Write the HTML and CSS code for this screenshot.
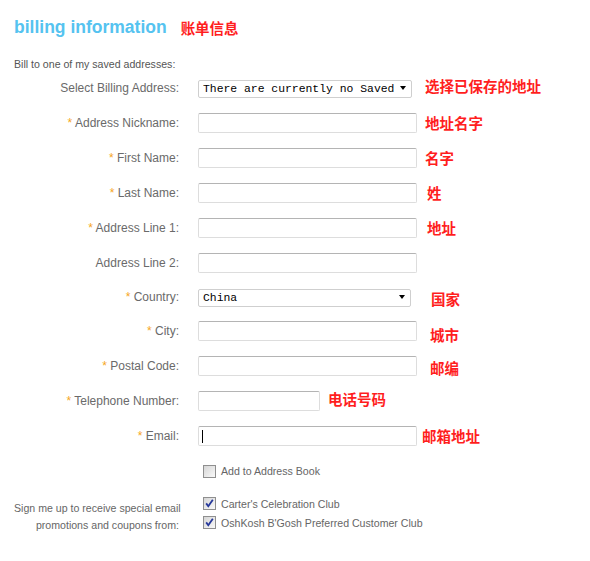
FILE: index.html
```html
<!DOCTYPE html>
<html lang="en">
<head>
  <meta charset="UTF-8">
  <meta name="viewport" content="width=device-width, initial-scale=1.0">
  <title>Billing Information</title>
  <link rel="stylesheet" href="styles.css">
</head>
<body>
  <div class="page">
    <div class="title-row">
      <h1>billing information</h1>
      <span class="note note-title">账单信息</span>
    </div>
    <p class="intro">Bill to one of my saved addresses:</p>

    <form class="billing-form">
      <div class="row">
        <label for="savedAddress">Select Billing Address:</label>
        <div class="field">
          <span class="select-box select-saved">
            <select id="savedAddress" name="savedAddress">
              <option>There are currently no Saved</option>
            </select>
          </span>
          <span class="note gap-md up">选择已保存的地址</span>
        </div>
      </div>

      <div class="row">
        <label for="nickname"><span class="req">*</span> Address Nickname:</label>
        <div class="field">
          <input type="text" id="nickname" name="nickname">
          <span class="note">地址名字</span>
        </div>
      </div>

      <div class="row">
        <label for="firstName"><span class="req">*</span> First Name:</label>
        <div class="field">
          <input type="text" id="firstName" name="firstName">
          <span class="note">名字</span>
        </div>
      </div>

      <div class="row">
        <label for="lastName"><span class="req">*</span> Last Name:</label>
        <div class="field">
          <input type="text" id="lastName" name="lastName">
          <span class="note gap-sm-plus">姓</span>
        </div>
      </div>

      <div class="row">
        <label for="address1"><span class="req">*</span> Address Line 1:</label>
        <div class="field">
          <input type="text" id="address1" name="address1">
          <span class="note gap-sm-plus">地址</span>
        </div>
      </div>

      <div class="row">
        <label for="address2">Address Line 2:</label>
        <div class="field">
          <input type="text" id="address2" name="address2">
        </div>
      </div>

      <div class="row row-short">
        <label for="country"><span class="req">*</span> Country:</label>
        <div class="field">
          <span class="select-box select-country">
            <select id="country" name="country">
              <option>China</option>
            </select>
          </span>
          <span class="note gap-lg down">国家</span>
        </div>
      </div>

      <div class="row">
        <label for="city"><span class="req">*</span> City:</label>
        <div class="field">
          <input type="text" id="city" name="city">
          <span class="note gap-md down-more">城市</span>
        </div>
      </div>

      <div class="row">
        <label for="postal"><span class="req">*</span> Postal Code:</label>
        <div class="field">
          <input type="text" id="postal" name="postal">
          <span class="note gap-md down">邮编</span>
        </div>
      </div>

      <div class="row">
        <label for="phone"><span class="req">*</span> Telephone Number:</label>
        <div class="field">
          <input type="text" id="phone" name="phone" class="input-short">
          <span class="note up">电话号码</span>
        </div>
      </div>

      <div class="row">
        <label for="email"><span class="req">*</span> Email:</label>
        <div class="field">
          <span class="caret-field">
            <input type="text" id="email" name="email">
          </span>
          <span class="note gap-sm">邮箱地址</span>
        </div>
      </div>

      <div class="row row-check">
        <span></span>
        <div class="check-list">
          <div class="check-item">
            <span class="check"></span>
            <span>Add to Address Book</span>
          </div>
        </div>
      </div>

      <div class="row row-signup">
        <div class="signup-text">Sign me up to receive special email<br>promotions and coupons from:</div>
        <div class="check-list">
          <div class="check-item">
            <span class="check checked">
              <svg width="11" height="11" viewBox="0 0 11 11"><path d="M2.2 5.4 L4.3 8.2 L8.8 1.8" fill="none" stroke="#26389a" stroke-width="1.8"/></svg>
            </span>
            <span>Carter's Celebration Club</span>
          </div>
          <div class="check-item">
            <span class="check checked">
              <svg width="11" height="11" viewBox="0 0 11 11"><path d="M2.2 5.4 L4.3 8.2 L8.8 1.8" fill="none" stroke="#26389a" stroke-width="1.8"/></svg>
            </span>
            <span>OshKosh B'Gosh Preferred Customer Club</span>
          </div>
        </div>
      </div>
    </form>
  </div>
</body>
</html>
```

FILE: styles.css
```css
body {
  margin: 0;
  background: #ffffff;
  font-family: "Liberation Sans", Arial, sans-serif;
  color: #666666;
}

.page {
  padding: 16px 0 0 14px;
}

.title-row {
  display: flex;
  align-items: center;
  height: 22px;
}

h1 {
  margin: 0;
  font-size: 17.5px;
  font-weight: bold;
  color: #55c3f0;
  line-height: 22px;
}

.note {
  font-family: "Noto Sans CJK SC", sans-serif;
  font-size: 14.5px;
  font-weight: bold;
  color: #ff1e1e;
  line-height: 16px;
  margin-left: 8px;
  white-space: nowrap;
}

.note-title {
  margin-left: 14px;
  margin-top: 2px;
}

.gap-sm { margin-left: 5px; }
.gap-sm-plus { margin-left: 10px; }
.gap-md { margin-left: 13px; }
.gap-lg { margin-left: 20px; }
.up { position: relative; top: -2px; }
.down { position: relative; top: 2px; }
.down-more { position: relative; top: 4px; }

.intro {
  margin: 20px 0 0 0;
  font-size: 10.6px;
  line-height: 12px;
  color: #555555;
}

.billing-form {
  margin: 0;
}

.row {
  display: grid;
  grid-template-columns: 165px 1fr;
  column-gap: 19px;
  align-items: center;
  height: 35px;
}

.row-short {
  height: 33px;
}

.row label {
  text-align: right;
  font-size: 12px;
  color: #6a6a6a;
  white-space: nowrap;
}

.req {
  color: #f6a623;
}

.field {
  display: flex;
  align-items: center;
}

.field input {
  width: 219px;
  height: 20px;
  box-sizing: border-box;
  margin: 0;
  border: 1px solid #dddddd;
  border-top-color: #b4b4b4;
  border-radius: 2px;
  background: #ffffff;
  outline: none;
}

.field input.input-short {
  width: 122px;
}

.select-box {
  position: relative;
  display: inline-block;
}

.select-box select {
  appearance: none;
  -webkit-appearance: none;
  height: 18px;
  box-sizing: border-box;
  margin: 0;
  padding: 0 0 0 4px;
  border: 1px solid #cfcfcf;
  border-radius: 2px;
  background: #ffffff;
  font-family: "Liberation Mono", "Courier New", monospace;
  font-size: 11.4px;
  line-height: 16px;
  color: #000000;
  outline: none;
}

.select-saved select {
  width: 214px;
}

.select-country select {
  width: 213px;
}

.select-box::after {
  content: "";
  position: absolute;
  right: 6px;
  top: 8px;
  border-left: 3.5px solid transparent;
  border-right: 3.5px solid transparent;
  border-top: 4px solid #000000;
  pointer-events: none;
}

.caret-field {
  position: relative;
  display: inline-block;
}

.caret-field::after {
  content: "";
  position: absolute;
  left: 4px;
  top: 4px;
  width: 1px;
  height: 13px;
  background: #000000;
}

.row-check {
  height: 36px;
}

.check-list {
  display: flex;
  flex-direction: column;
  padding-left: 5px;
}

.check-item {
  display: flex;
  align-items: center;
  gap: 5px;
  height: 19px;
  font-size: 10.6px;
  color: #666666;
  white-space: nowrap;
}

.check {
  display: inline-flex;
  align-items: center;
  justify-content: center;
  width: 13px;
  height: 13px;
  box-sizing: border-box;
  border: 1px solid #8f8f8f;
  background: linear-gradient(135deg, #d6d6d6, #f9f9f9);
}

.row-signup {
  align-items: start;
  height: auto;
  margin-top: 5px;
}

.signup-text {
  text-align: right;
  font-size: 10.6px;
  line-height: 17px;
  padding-top: 6px;
  color: #666666;
  white-space: nowrap;
}
```
